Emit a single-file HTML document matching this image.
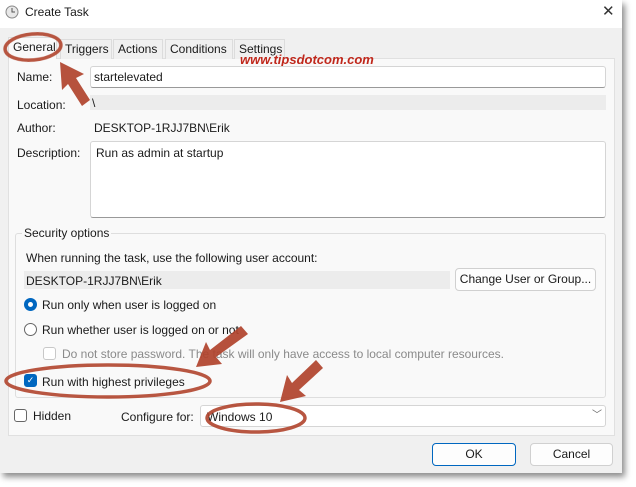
<!DOCTYPE html>
<html><head><style>
*{box-sizing:border-box;margin:0;padding:0}
body{width:636px;height:487px;background:#fff;font-family:"Liberation Sans",sans-serif;font-size:12px;color:#1a1a1a;position:relative;overflow:hidden}
.win{position:absolute;left:0;top:0;width:622px;height:473px;background:#f0f0f0;box-shadow:3px 4px 6px rgba(0,0,0,.45)}
.title{position:absolute;left:0;top:0;width:622px;height:28px;background:#fff}
.a{position:absolute;white-space:nowrap}
.panel{position:absolute;left:8px;top:58px;width:607px;height:378px;background:#f9f9f9;border:1px solid #e0e0e0}
.tab{position:absolute;top:39px;height:20px;border:1px solid #dcdcdc;border-bottom:none;background:#f0f0f0;padding:2px 4px;font-size:12px}
.in{position:absolute;background:#fff;border:1px solid #d5d5d5;border-bottom-color:#999;border-radius:3px}
.ro{position:absolute;background:#ececec}
.btn{position:absolute;background:#fdfdfd;border:1px solid #d0d0d0;border-radius:4px;text-align:center;line-height:21px}
.cb{position:absolute;width:13px;height:13px;border:1px solid #666;border-radius:3px;background:#fff}
.rad{position:absolute;width:13px;height:13px;border-radius:50%;border:1px solid #666;background:#fff}
</style></head><body>
<div class="win">
<div class="title"></div>
<svg class="a" style="left:5px;top:5px" width="14" height="14"><circle cx="7" cy="7" r="6" fill="#e8e8e8" stroke="#888"/><path d="M7 3v4h3" stroke="#555" fill="none"/></svg>
<div class="a" style="left:25px;top:5px;font-size:12px">Create Task</div>
<div class="a" style="left:602px;top:2px;font-size:15px;color:#333">✕</div>
<div class="panel"></div>
<div class="tab" style="left:8px;width:49px;top:37px;height:22px;background:#f9f9f9">General</div>
<div class="tab" style="left:60px;width:52px">Triggers</div>
<div class="tab" style="left:113px;width:50px">Actions</div>
<div class="tab" style="left:165px;width:68px">Conditions</div>
<div class="tab" style="left:234px;width:51px">Settings</div>
<div class="a" style="left:240px;top:52px;color:#c0281c;font-weight:bold;font-style:italic;font-size:13px">www.tipsdotcom.com</div>
<div class="a" style="left:17px;top:70px">Name:</div>
<div class="in" style="left:90px;top:66px;width:516px;height:22px"></div>
<div class="a" style="left:94px;top:70px">startelevated</div>
<div class="a" style="left:17px;top:98px">Location:</div>
<div class="ro" style="left:90px;top:95px;width:516px;height:15px"></div>
<div class="a" style="left:92px;top:96px">\</div>
<div class="a" style="left:17px;top:121px">Author:</div>
<div class="a" style="left:94px;top:121px">DESKTOP-1RJJ7BN\Erik</div>
<div class="a" style="left:17px;top:146px">Description:</div>
<div class="in" style="left:90px;top:141px;width:516px;height:77px"></div>
<div class="a" style="left:96px;top:146px">Run as admin at startup</div>
<div class="a" style="left:15px;top:233px;width:591px;height:165px;border:1px solid #dedede;border-radius:3px"></div>
<div class="a" style="left:22px;top:226px;background:#f9f9f9;padding:0 2px">Security options</div>
<div class="a" style="left:26px;top:251px">When running the task, use the following user account:</div>
<div class="ro" style="left:24px;top:271px;width:426px;height:18px"></div>
<div class="a" style="left:26px;top:274px">DESKTOP-1RJJ7BN\Erik</div>
<div class="btn" style="left:455px;top:268px;width:141px;height:23px">Change User or Group...</div>
<div class="rad" style="left:24px;top:298px;border:4px solid #0067c0"></div>
<div class="a" style="left:42px;top:298px">Run only when user is logged on</div>
<div class="rad" style="left:24px;top:323px"></div>
<div class="a" style="left:42px;top:323px">Run whether user is logged on or not</div>
<div class="cb" style="left:43px;top:347px;border-color:#c8c8c8"></div>
<div class="a" style="left:62px;top:347px;color:#8a8a8a">Do not store password.  The task will only have access to local computer resources.</div>
<div class="cb" style="left:24px;top:374px;background:#0067c0;border-color:#0067c0;color:#fff;font-size:9px;line-height:11px;text-align:center">✓</div>
<div class="a" style="left:42px;top:375px">Run with highest privileges</div>
<div class="cb" style="left:14px;top:409px"></div>
<div class="a" style="left:33px;top:409px">Hidden</div>
<div class="a" style="left:121px;top:410px">Configure for:</div>
<div class="in" style="left:200px;top:405px;width:406px;height:22px;border-bottom-color:#d5d5d5"></div>
<div class="a" style="left:207px;top:410px">Windows 10</div>
<div class="a" style="left:592px;top:406px;color:#666;font-size:10px">﹀</div>
<div class="btn" style="left:432px;top:443px;width:84px;height:23px;border:1px solid #0067c0">OK</div>
<div class="btn" style="left:530px;top:443px;width:83px;height:23px">Cancel</div>
</div>
<svg class="a" style="left:0;top:0" width="636" height="487">
<g fill="none" stroke="#b0432c" stroke-width="3.5" opacity=".9">
<ellipse cx="33" cy="47" rx="28" ry="13" transform="rotate(-5 33 47)"/>
<ellipse cx="108" cy="381" rx="102" ry="16"/>
<ellipse cx="256" cy="418" rx="49" ry="14"/>
</g>
<g fill="#b0432c" opacity=".92">
<path d="M60 62 L62 90 L68 84 L82 106 L90 100 L76 78 L84 74 Z"/>
<path d="M196 367 L222 364 L216 357 L248 334 L241 326 L210 350 L206 342 Z"/>
<path d="M280 402 L306 396 L299 390 L323 368 L316 360 L292 383 L287 375 Z"/>
</g>
</svg>
</body></html>
